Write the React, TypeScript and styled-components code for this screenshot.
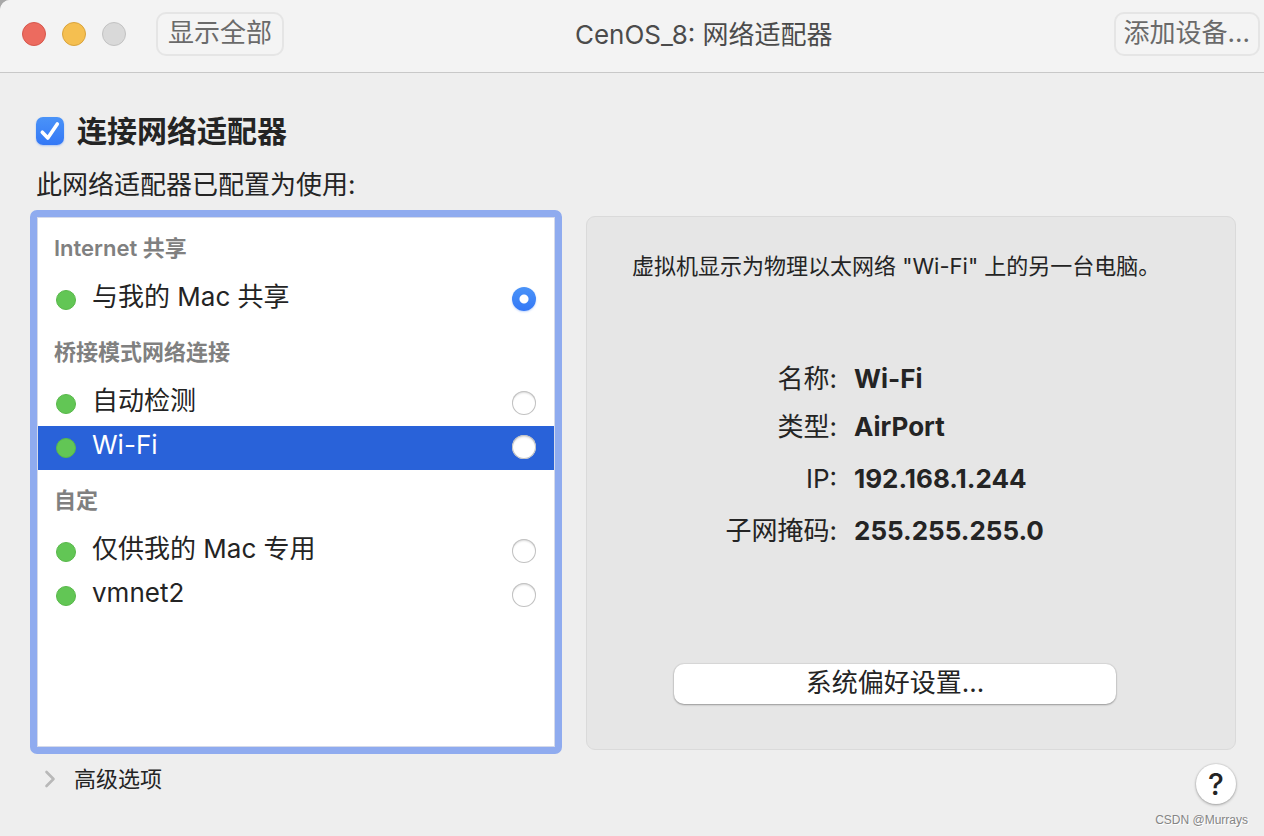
import React, { useState } from "react";
import styled, { createGlobalStyle, css } from "styled-components";

const GlobalStyle = createGlobalStyle`
  *, *::before, *::after { box-sizing: border-box; }
  body {
    margin: 0;
    background: #a8a8a8;
    color: #242424;
    font-family: Inter, "Noto Sans CJK SC", sans-serif;
    font-size: 26px;
    line-height: 36px;
  }
  button, input { font: inherit; color: inherit; margin: 0; }
`;

const Window = styled.div`
  display: flex;
  flex-direction: column;
  min-height: 100vh;
  background: #eeeeee;
  border-top-left-radius: 10px;
`;

const TitleBar = styled.header`
  display: flex;
  align-items: center;
  height: 73px;
  padding: 0 4px 4px 22px;
  background: #f3f3f3;
  border-bottom: 1px solid #c8c8c8;
  border-top-left-radius: 10px;
`;

const Lights = styled.div`
  display: flex;
  gap: 16px;
  margin-right: 30px;
`;

const Light = styled.button<{ $fill: string; $edge: string }>`
  width: 24px;
  height: 24px;
  padding: 0;
  border: 1px solid ${(p) => p.$edge};
  border-radius: 50%;
  background: ${(p) => p.$fill};
`;

const ToolButton = styled.button`
  height: 44px;
  min-width: 128px;
  padding: 0 8px 2px;
  border: 2px solid #e5e5e5;
  border-radius: 10px;
  background: #f4f4f4;
  color: #6a6a6a;
  line-height: 36px;
  white-space: nowrap;
`;

const Title = styled.h1`
  flex: 1;
  margin: 0;
  padding: 2px 0 0 10px;
  color: #4b4b4b;
  font-size: 26px;
  font-weight: 400;
  text-align: center;
`;

const Content = styled.main`
  display: flex;
  flex-direction: column;
  flex: 1;
  padding: 38px 28px 0 30px;
`;

const ConnectLabel = styled.label`
  display: flex;
  align-items: center;
  gap: 13px;
  height: 40px;
  padding-left: 6px;
  font-size: 30px;
  font-weight: 700;
`;

const CheckWrap = styled.span`
  display: grid;
  place-items: center;
  width: 28px;
  height: 28px;

  > * { grid-area: 1 / 1; }
  > svg { pointer-events: none; }
`;

const Checkbox = styled.input`
  appearance: none;
  width: 28px;
  height: 28px;
  border-radius: 7px;
  background: #ffffff;
  box-shadow: inset 0 0 0 1px #c4c4c4;

  &:checked {
    background: linear-gradient(#4a93f8, #3478f6);
    box-shadow: 0 1px 2px rgba(52, 120, 246, 0.35);
  }
`;

const Intro = styled.p`
  margin: 16px 0 7px;
  padding-left: 6px;
`;

const Columns = styled.div`
  display: grid;
  grid-template-columns: minmax(0, 532fr) minmax(0, 650fr);
  gap: 24px;
`;

const NetworkList = styled.div`
  min-height: 544px;
  padding: 1px;
  border: 7px solid #8fabef;
  border-radius: 7px;
  background: #ffffff;
  box-shadow: inset 0 0 0 1px #d5daea;
`;

const GroupTitle = styled.h2`
  margin: 0;
  padding: 0 16px;
  color: #808080;
  font-size: 22px;
  font-weight: 600;
  line-height: 60px;
`;

const Row = styled.label<{ $highlighted?: boolean }>`
  display: flex;
  align-items: center;
  height: 44px;
  padding: 0 18px;
  ${(p) =>
    p.$highlighted &&
    css`
      background: #2962d9;
      color: #ffffff;
    `}
`;

const StatusDot = styled.span`
  width: 20px;
  height: 20px;
  margin-right: 16px;
  border: 1px solid #58b84a;
  border-radius: 50%;
  background: #62c655;
`;

const RowName = styled.span`
  flex: 1;
  padding-bottom: 6px;
`;

const Radio = styled.input`
  appearance: none;
  width: 24px;
  height: 24px;
  margin-bottom: 2px;
  border-radius: 50%;
  background: #ffffff;
  box-shadow: inset 0 0 0 1px #c2c2c2, inset 0 2px 2px rgba(0, 0, 0, 0.14);

  &:checked {
    background: radial-gradient(circle, #ffffff 4px, transparent 5px),
      linear-gradient(#4a93f8, #3478f6);
    box-shadow: 0 1px 2px rgba(52, 120, 246, 0.3);
  }
`;

const DetailPanel = styled.section`
  display: flex;
  flex-direction: column;
  margin: 6px 0 4px;
  border: 1px solid #dadada;
  border-radius: 9px;
  background: #e6e6e6;
`;

const Description = styled.p`
  margin: 32px 20px 74px 45px;
  font-size: 22px;
  line-height: 34px;
`;

const Facts = styled.dl`
  display: grid;
  grid-template-columns: 250px 1fr;
  grid-template-rows: 44px;
  grid-auto-rows: 52px;
  align-items: center;
  column-gap: 17px;
  margin: 0;
`;

const FactLabel = styled.dt`
  text-align: right;
`;

const FactValue = styled.dd`
  margin: 0;
  font-weight: 700;
`;

const PreferencesButton = styled.button`
  height: 40px;
  margin: auto 119px 45px 87px;
  padding: 0 0 2px;
  border: 0;
  border-radius: 10px;
  background: #ffffff;
  box-shadow: 0 0 1px 1px rgba(0, 0, 0, 0.06), 0 1px 2px rgba(0, 0, 0, 0.3);
`;

const Footer = styled.div`
  display: flex;
  align-items: flex-start;
  justify-content: space-between;
  padding-left: 12px;
`;

const AdvancedButton = styled.button`
  display: flex;
  align-items: center;
  gap: 17px;
  margin-top: 9px;
  padding: 0;
  border: 0;
  background: none;
  font-size: 22px;
  line-height: 32px;
`;

const HelpButton = styled.button`
  width: 40px;
  height: 40px;
  margin-top: 10px;
  padding: 0;
  border: 0;
  border-radius: 50%;
  background: #ffffff;
  box-shadow: 0 0 1px 1px rgba(0, 0, 0, 0.06), 0 1px 3px rgba(0, 0, 0, 0.3);
  font-size: 30px;
  font-weight: 500;
  line-height: 40px;
`;

const Credit = styled.p`
  margin: auto 0 0;
  padding: 0 16px 7px;
  color: #858585;
  font-family: "Liberation Sans", sans-serif;
  font-size: 12px;
  line-height: 18px;
  text-align: right;
  text-shadow: 1px 1px 0 #ffffff;
`;

const groups = [
  { title: "Internet 共享", items: ["与我的 Mac 共享"] },
  { title: "桥接模式网络连接", items: ["自动检测", "Wi-Fi"] },
  { title: "自定", items: ["仅供我的 Mac 专用", "vmnet2"] },
];

const facts = [
  ["名称:", "Wi-Fi"],
  ["类型:", "AirPort"],
  ["IP:", "192.168.1.244"],
  ["子网掩码:", "255.255.255.0"],
];

export default function App() {
  const [connected, setConnected] = useState(true);
  const [network, setNetwork] = useState("与我的 Mac 共享");

  return (
    <>
      <GlobalStyle />
      <Window>
        <TitleBar>
          <Lights>
            <Light aria-label="关闭" $fill="#ec6b5f" $edge="#d6574c" />
            <Light aria-label="最小化" $fill="#f5bf50" $edge="#d9a33c" />
            <Light aria-label="缩放" $fill="#d9d9d9" $edge="#c2c2c2" />
          </Lights>
          <ToolButton>显示全部</ToolButton>
          <Title>CenOS_8: 网络适配器</Title>
          <ToolButton>添加设备...</ToolButton>
        </TitleBar>

        <Content>
          <ConnectLabel>
            <CheckWrap>
              <Checkbox
                type="checkbox"
                checked={connected}
                onChange={(e) => setConnected(e.target.checked)}
              />
              <svg width="28" height="28" viewBox="0 0 28 28" aria-hidden="true">
                <path
                  d="M6.3 15.2 11.8 21 21.3 7"
                  fill="none"
                  stroke="#fff"
                  strokeWidth="3.6"
                  strokeLinecap="round"
                  strokeLinejoin="round"
                />
              </svg>
            </CheckWrap>
            连接网络适配器
          </ConnectLabel>
          <Intro>此网络适配器已配置为使用:</Intro>

          <Columns>
            <NetworkList role="radiogroup" aria-label="网络适配器">
              {groups.map((group) => (
                <div key={group.title}>
                  <GroupTitle>{group.title}</GroupTitle>
                  {group.items.map((item) => (
                    <Row key={item} $highlighted={item === "Wi-Fi"}>
                      <StatusDot />
                      <RowName>{item}</RowName>
                      <Radio
                        type="radio"
                        name="network"
                        checked={network === item}
                        onChange={() => setNetwork(item)}
                      />
                    </Row>
                  ))}
                </div>
              ))}
            </NetworkList>

            <DetailPanel>
              <Description>虚拟机显示为物理以太网络 "Wi-Fi" 上的另一台电脑。</Description>
              <Facts>
                {facts.map(([label, value]) => (
                  <React.Fragment key={label}>
                    <FactLabel>{label}</FactLabel>
                    <FactValue>{value}</FactValue>
                  </React.Fragment>
                ))}
              </Facts>
              <PreferencesButton>系统偏好设置...</PreferencesButton>
            </DetailPanel>
          </Columns>

          <Footer>
            <AdvancedButton>
              <svg width="15" height="20" viewBox="0 0 15 20" aria-hidden="true">
                <path
                  d="M4.5 3 11.5 10 4.5 17"
                  fill="none"
                  stroke="#b8b8b8"
                  strokeWidth="2.6"
                  strokeLinecap="round"
                  strokeLinejoin="round"
                />
              </svg>
              高级选项
            </AdvancedButton>
            <HelpButton aria-label="帮助">?</HelpButton>
          </Footer>
        </Content>
        <Credit>CSDN @Murrays</Credit>
      </Window>
    </>
  );
}
